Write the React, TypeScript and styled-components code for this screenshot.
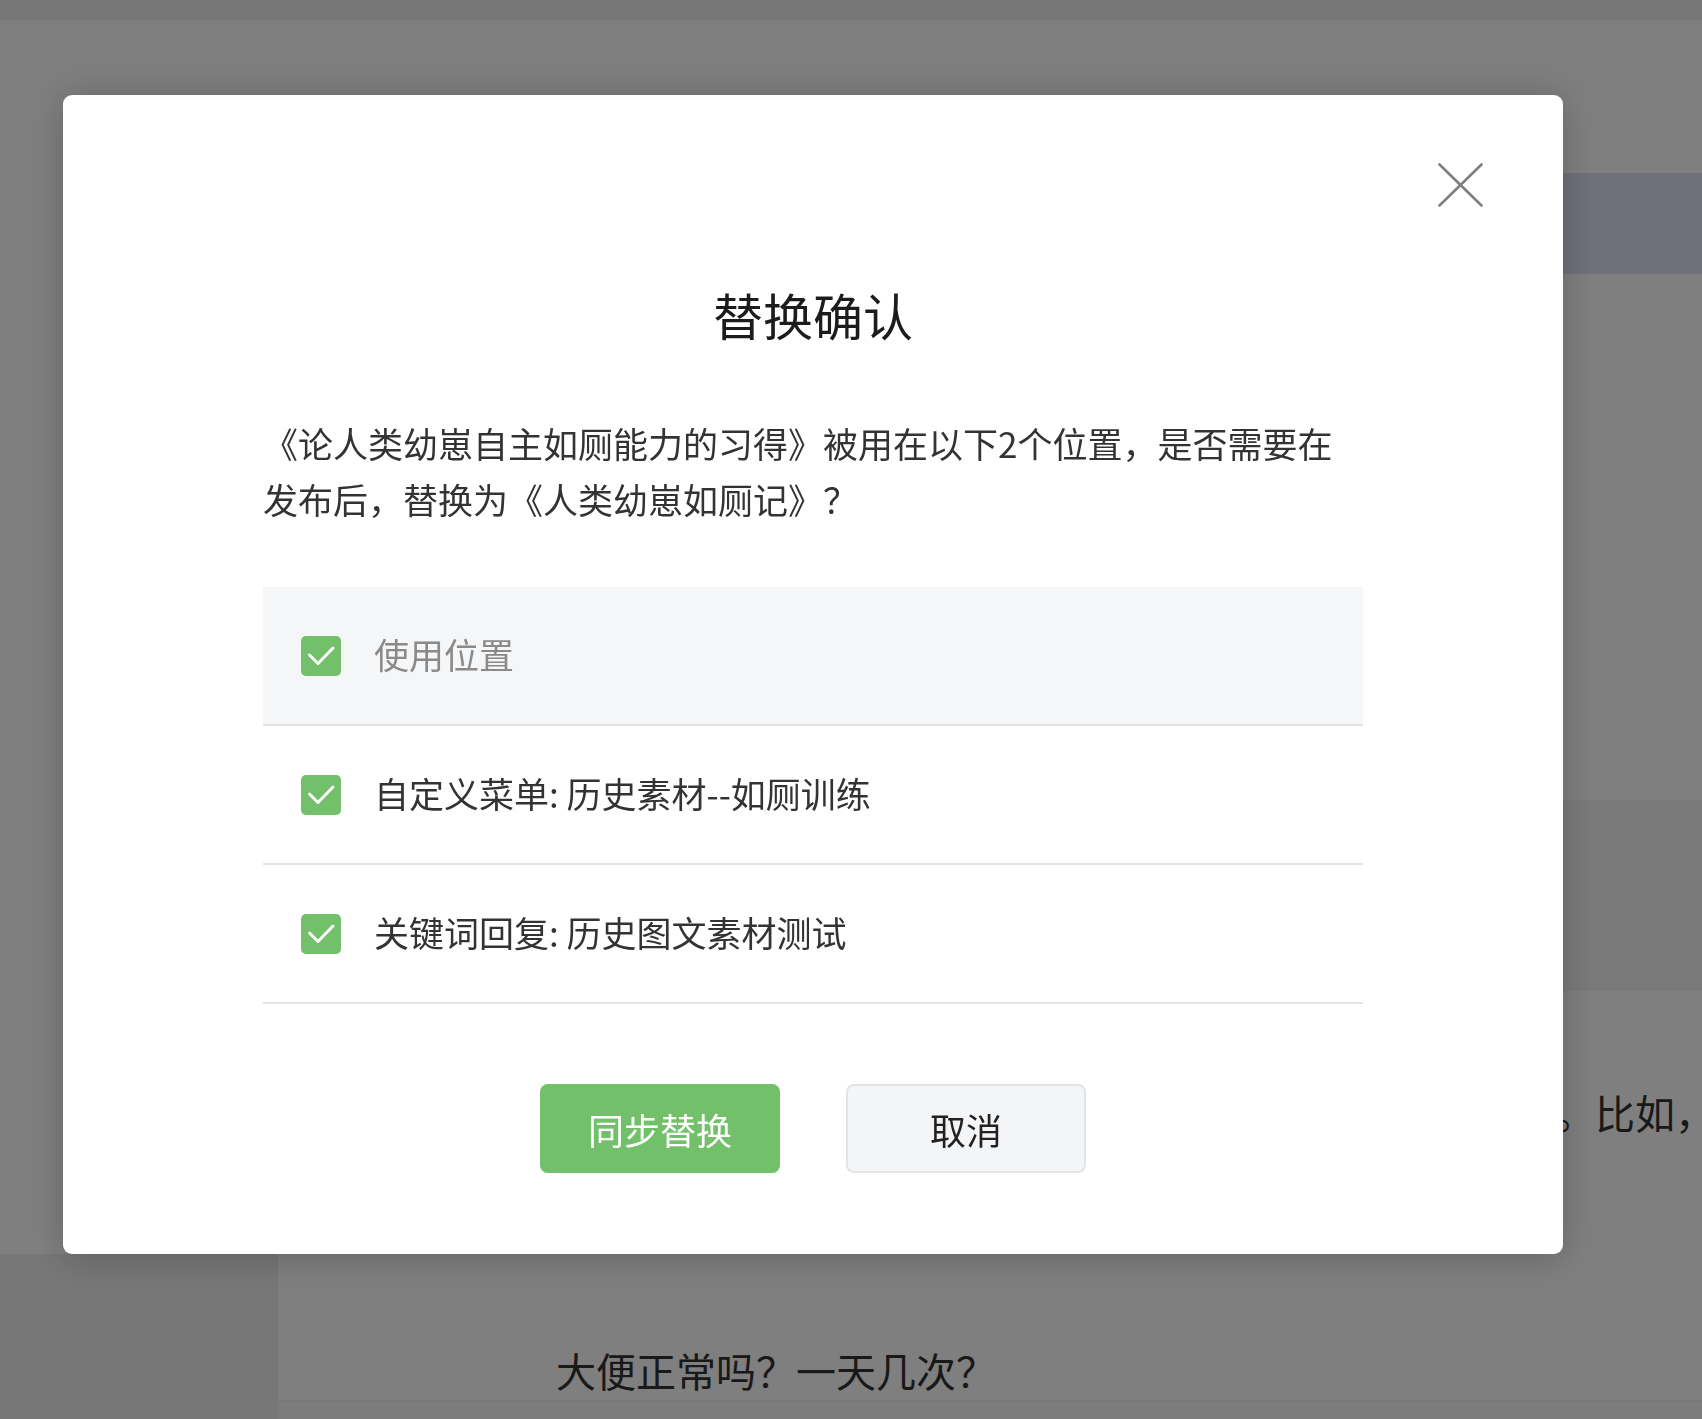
import React from "react";
import styled, { createGlobalStyle } from "styled-components";

const GlobalStyle = createGlobalStyle`
  html, body {
    margin: 0;
    padding: 0;
    width: 1702px;
    height: 1419px;
    overflow: hidden;
    background: #ffffff;
    font-family: "Noto Sans CJK SC", "Noto Sans", sans-serif;
  }
  * {
    box-sizing: border-box;
  }
`;

const green = "#72c06a";

// ---- page behind the overlay ----

const Page = styled.div`
  width: 1702px;
  height: 1419px;
  display: flex;
  flex-direction: column;
  overflow: hidden;
  background: #ffffff;
`;

const Band = styled.div<{ $h: number; $bg: string }>`
  height: ${(p) => p.$h}px;
  flex-shrink: 0;
  background: ${(p) => p.$bg};
`;

const PageBody = styled.div`
  flex: 1;
  display: grid;
  grid-template-columns: 278px 1fr;
`;

const Sidebar = styled.div`
  display: flex;
  flex-direction: column;
  background: #efefef;
`;

const SidebarTop = styled.div`
  height: 1157px;
  background: #ffffff;
`;

const MainCol = styled.div`
  display: flex;
  flex-direction: column;
  min-width: 0;
`;

const Article = styled.div`
  padding-top: 91px;
  color: #333333;
  font-size: 40px;
  line-height: 60px;
  white-space: nowrap;
  overflow: hidden;
`;

const ArticleLine = styled.div`
  padding-left: 1197px;
`;

const ArticleHeading = styled.div`
  margin-top: 198px;
  padding-left: 278px;
`;

const PageFooter = styled.div`
  flex: 1;
  background: #f9f9f9;
  border-top: 2px solid #f0f0f0;
`;

// ---- dialog ----

const Overlay = styled.div`
  position: fixed;
  inset: 0;
  background: rgba(0, 0, 0, 0.5);
  padding: 95px 0 0 63px;
`;

const Dialog = styled.div`
  width: 1500px;
  background: #ffffff;
  border-radius: 9px;
  box-shadow: 0 4px 36px rgba(0, 0, 0, 0.22);
  padding: 68px 80px 81px;
  display: flex;
  flex-direction: column;
`;

const DialogHeader = styled.div`
  display: flex;
  justify-content: flex-end;
`;

const CloseButton = styled.button`
  width: 45px;
  height: 44px;
  padding: 0;
  border: none;
  background: transparent;
  cursor: pointer;
  display: block;
`;

const DialogBody = styled.div`
  padding: 0 120px;
  display: flex;
  flex-direction: column;
`;

const Title = styled.h2`
  margin: 72px 0 0;
  text-align: center;
  font-size: 50px;
  line-height: 70px;
  font-weight: 400;
  color: #1c1c1c;
`;

const Message = styled.p`
  margin: 66px 0 0;
  font-size: 35px;
  line-height: 56px;
  color: #333333;
`;

const Table = styled.div`
  margin-top: 60px;
  display: flex;
  flex-direction: column;
`;

const Row = styled.label<{ $head?: boolean }>`
  height: 139px;
  display: flex;
  align-items: center;
  gap: 33px;
  padding-left: 38px;
  border-bottom: 2px solid #e4e4e4;
  background: ${(p) => (p.$head ? "#f5f6f8" : "#ffffff")};
  color: ${(p) => (p.$head ? "#8a8a8a" : "#333333")};
  font-size: 35px;
  line-height: 1;
  cursor: pointer;
`;

const RowText = styled.span`
  margin-bottom: 4px;
`;

const CheckBox = styled.span`
  width: 40px;
  height: 40px;
  flex-shrink: 0;
  border-radius: 5px;
  background: ${green};
  display: flex;
  align-items: center;
  justify-content: center;
`;

const Actions = styled.div`
  margin-top: 80px;
  display: flex;
  justify-content: center;
  gap: 66px;
`;

const Button = styled.button<{ $primary?: boolean }>`
  width: 240px;
  height: 89px;
  border-radius: 8px;
  font-family: inherit;
  font-size: 36px;
  cursor: pointer;
  border: ${(p) => (p.$primary ? "none" : "2px solid #e3e4e6")};
  background: ${(p) => (p.$primary ? green : "#f4f5f7")};
  color: ${(p) => (p.$primary ? "#ffffff" : "#222222")};
`;

const CheckIcon = () => (
  <svg width="40" height="40" viewBox="0 0 40 40">
    <polyline
      points="8.5,19 17,27.5 32,12"
      fill="none"
      stroke="#ffffff"
      strokeWidth="3"
      strokeLinecap="round"
      strokeLinejoin="round"
    />
  </svg>
);

const CloseIcon = () => (
  <svg width="45" height="44" viewBox="0 0 45 44">
    <line x1="1.5" y1="1.5" x2="43.5" y2="42.5" stroke="#7f7f7f" strokeWidth="2.6" strokeLinecap="round" />
    <line x1="43.5" y1="1.5" x2="1.5" y2="42.5" stroke="#7f7f7f" strokeWidth="2.6" strokeLinecap="round" />
  </svg>
);

const places = ["自定义菜单: 历史素材--如厕训练", "关键词回复: 历史图文素材测试"];

export default function App() {
  return (
    <>
      <GlobalStyle />
      <Page>
        <Band $h={20} $bg="#eeeeee" />
        <Band $h={77} $bg="#fcfcfc" />
        <PageBody>
          <Sidebar>
            <SidebarTop />
          </Sidebar>
          <MainCol>
            <Band $h={76} $bg="#ffffff" />
            <Band $h={101} $bg="#dce2f2" />
            <Band $h={526} $bg="#ffffff" />
            <Band $h={191} $bg="#f4f4f4" />
            <Article>
              <ArticleLine>变化。比如，新生儿每天会排便多次</ArticleLine>
              <ArticleHeading>大便正常吗？一天几次？</ArticleHeading>
            </Article>
            <PageFooter />
          </MainCol>
        </PageBody>
      </Page>

      <Overlay>
        <Dialog role="dialog">
          <DialogHeader>
            <CloseButton aria-label="关闭">
              <CloseIcon />
            </CloseButton>
          </DialogHeader>
          <DialogBody>
            <Title>替换确认</Title>
            <Message>
              《论人类幼崽自主如厕能力的习得》被用在以下2个位置，是否需要在发布后，替换为《人类幼崽如厕记》？
            </Message>
            <Table>
              <Row $head>
                <CheckBox>
                  <CheckIcon />
                </CheckBox>
                <RowText>使用位置</RowText>
              </Row>
              {places.map((p) => (
                <Row key={p}>
                  <CheckBox>
                    <CheckIcon />
                  </CheckBox>
                  <RowText>{p}</RowText>
                </Row>
              ))}
            </Table>
            <Actions>
              <Button $primary>同步替换</Button>
              <Button>取消</Button>
            </Actions>
          </DialogBody>
        </Dialog>
      </Overlay>
    </>
  );
}
